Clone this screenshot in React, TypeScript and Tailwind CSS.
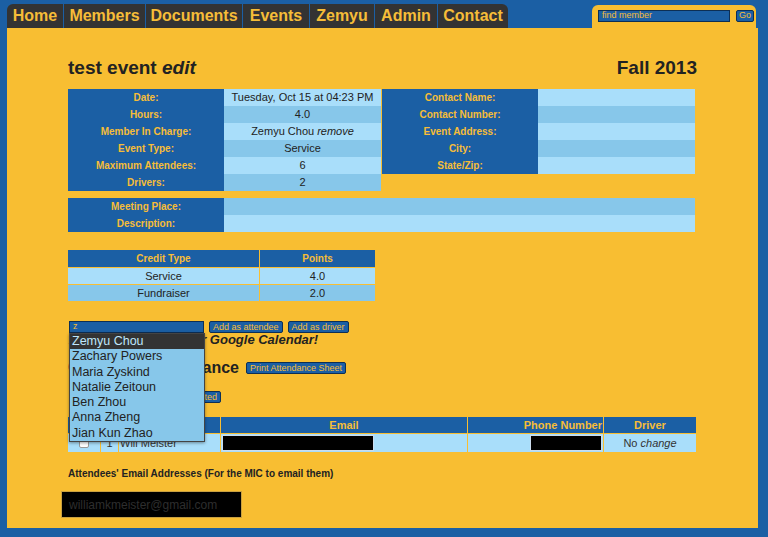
import React from "react";

const navItems = [
  { label: "Home", w: "w-[56px]", extra: "rounded-tl-md" },
  { label: "Members", w: "w-[81px]", extra: "" },
  { label: "Documents", w: "w-[96px]", extra: "" },
  { label: "Events", w: "w-[66px]", extra: "" },
  { label: "Zemyu", w: "w-[64px]", extra: "" },
  { label: "Admin", w: "w-[62px]", extra: "" },
  { label: "Contact", w: "w-[70px]", extra: "rounded-tr-md" },
];

const leftRows: { label: string; value: React.ReactNode }[] = [
  { label: "Date:", value: "Tuesday, Oct 15 at 04:23 PM" },
  { label: "Hours:", value: "4.0" },
  {
    label: "Member In Charge:",
    value: (
      <span>
        Zemyu Chou <i>remove</i>
      </span>
    ),
  },
  { label: "Event Type:", value: "Service" },
  { label: "Maximum Attendees:", value: "6" },
  { label: "Drivers:", value: "2" },
];

const rightRows = ["Contact Name:", "Contact Number:", "Event Address:", "City:", "State/Zip:"];

const suggestions = [
  "Zemyu Chou",
  "Zachary Powers",
  "Maria Zyskind",
  "Natalie Zeitoun",
  "Ben Zhou",
  "Anna Zheng",
  "Jian Kun Zhao",
];

const rowBg = (i: number) => (i % 2 === 0 ? "bg-[#a9defa]" : "bg-[#87c7ea]");

function Label({ children }: { children: React.ReactNode }) {
  return (
    <div className="flex h-[17px] items-center justify-center bg-[#1b5fa4] text-[10px] font-bold text-[#f6bd38]">
      {children}
    </div>
  );
}

function SmallButton({ children }: { children: React.ReactNode }) {
  return (
    <button
      type="button"
      className="h-[12px] rounded-[2px] border border-[#0d2f55] bg-[#1b5fa4] px-[3px] text-[9px] leading-[10px] text-[#f6bd38]"
    >
      {children}
    </button>
  );
}

export default function App() {
  return (
    <div className="min-h-[537px] bg-[#1b5fa4] pt-1 font-['Liberation_Sans',Arial,sans-serif] text-[#222]">
      {/* top bar */}
      <div className="flex h-6 items-end justify-between pl-[7px] pr-[12px]">
        <nav className="flex h-6 gap-px">
          {navItems.map((n) => (
            <div
              key={n.label}
              className={`flex h-6 items-center justify-center bg-[#333333] text-[16px] font-bold text-[#f6bd38] ${n.w} ${n.extra}`}
            >
              {n.label}
            </div>
          ))}
        </nav>
        <div className="flex h-[23px] w-[164px] items-start gap-[6px] rounded-t-md bg-[#f8be32] pl-[6px] pt-[5px]">
          <div className="flex h-[12px] w-[132px] items-center border border-[#0d2f55] bg-[#1b5fa4] px-[3px] text-[9px] text-[#f6bd38]">
            find member
          </div>
          <div className="flex h-[12px] w-[18px] items-center justify-center rounded-[2px] border border-[#0d2f55] bg-[#1b5fa4] text-[9px] text-[#f6bd38]">
            Go
          </div>
        </div>
      </div>

      {/* main panel */}
      <div className="ml-[7px] h-[500px] w-[751px] bg-[#f8be32] pl-[61px] pt-[29px]">
        <div className="flex w-[629px] items-center justify-between text-[19px] font-bold leading-[22px] text-[#222]">
          <div>
            test event <i>edit</i>
          </div>
          <div>Fall 2013</div>
        </div>

        <div className="mt-[10px] flex w-[627px] items-start gap-px">
          <div className="grid w-[313px] grid-cols-[156px_157px]">
            {leftRows.map((r, i) => (
              <React.Fragment key={r.label}>
                <Label>{r.label}</Label>
                <div className={`flex h-[17px] items-center justify-center text-[11px] text-[#222] ${rowBg(i)}`}>
                  {r.value}
                </div>
              </React.Fragment>
            ))}
          </div>
          <div className="grid w-[313px] grid-cols-[156px_157px]">
            {rightRows.map((l, i) => (
              <React.Fragment key={l}>
                <Label>{l}</Label>
                <div className={`h-[17px] ${rowBg(i)}`} />
              </React.Fragment>
            ))}
          </div>
        </div>

        <div className="mt-[7px] grid w-[627px] grid-cols-[156px_471px]">
          <Label>Meeting Place:</Label>
          <div className="h-[17px] bg-[#87c7ea]" />
          <Label>Description:</Label>
          <div className="h-[17px] bg-[#a9defa]" />
        </div>

        <div className="mt-[18px] grid w-[307px] grid-cols-[191px_115px] gap-px">
          <Label>Credit Type</Label>
          <Label>Points</Label>
          {[
            ["Service", "4.0"],
            ["Fundraiser", "2.0"],
          ].map(([t, p], i) => (
            <React.Fragment key={t}>
              <div className={`flex h-[16px] items-center justify-center text-[11px] ${rowBg(i)}`}>{t}</div>
              <div className={`flex h-[16px] items-center justify-center text-[11px] ${rowBg(i)}`}>{p}</div>
            </React.Fragment>
          ))}
        </div>

        {/* add attendee */}
        <div className="relative mt-[20px]">
          <div className="flex items-center gap-[5px] pl-px">
            <div className="flex h-[12px] w-[135px] items-center border border-[#0d2f55] bg-[#1b5fa4] px-[3px] text-[9px] text-[#f6bd38]">
              z
            </div>
            <SmallButton>Add as attendee</SmallButton>
            <SmallButton>Add as driver</SmallButton>
          </div>
          <div className="absolute left-px top-[12px] z-10 w-[136px] border border-[#444] bg-[#87c7ea] shadow-[0_1px_3px_rgba(0,0,0,0.4)]">
            {suggestions.map((s, i) => (
              <div
                key={s}
                className={`h-[15.3px] px-[2px] text-[12.5px] leading-[15.3px] ${
                  i === 0 ? "bg-[#333333] text-[#bfe6fb]" : "text-[#222]"
                }`}
              >
                {s}
              </div>
            ))}
          </div>

          <div className="h-[14px] pl-px text-[13px] font-bold italic leading-[14px] text-[#222]">
            Add this event to your Google Calendar!
          </div>

          <div className="mt-[11px] flex items-center gap-[7px]">
            <div className="text-[16px] font-bold leading-[20px] text-[#222]">Confirmed Attendance</div>
            <SmallButton>Print Attendance Sheet</SmallButton>
          </div>

          <div className="mt-[13px] flex h-[12px] items-center pl-[74px]">
            <SmallButton>Remove Selected</SmallButton>
          </div>
        </div>

        {/* attendees */}
        <div className="mt-[14px] grid w-[627px] grid-cols-[32px_17px_101px_246px_135px_92px] gap-x-px text-[11px]">
          <div className="h-[16px] bg-[#1b5fa4]" />
          <div className="h-[16px] bg-[#1b5fa4]" />
          <div className="h-[16px] bg-[#1b5fa4]" />
          <div className="flex h-[16px] items-center justify-center bg-[#1b5fa4] text-[11px] font-bold text-[#f6bd38]">
            Email
          </div>
          <div className="flex h-[16px] items-center justify-end bg-[#1b5fa4] pr-px text-[11px] font-bold text-[#f6bd38]">
            Phone Number
          </div>
          <div className="flex h-[16px] items-center justify-center bg-[#1b5fa4] text-[11px] font-bold text-[#f6bd38]">
            Driver
          </div>

          <div className="mt-px flex h-[18px] items-center justify-center bg-[#a9defa]">
            <div className="h-[10px] w-[10px] rounded-[2px] border border-[#999] bg-white" />
          </div>
          <div className="mt-px flex h-[18px] items-center justify-center bg-[#a9defa] text-[#333]">1</div>
          <div className="mt-px flex h-[18px] items-center bg-[#a9defa] pl-[1px] text-[#333]">Will Meister</div>
          <div className="mt-px flex h-[18px] items-center bg-[#a9defa] pl-px">
            <div className="h-[16px] w-[152px] border border-[#cde] bg-black" />
          </div>
          <div className="mt-px flex h-[18px] items-center justify-end bg-[#a9defa] pr-px">
            <div className="h-[16px] w-[72px] border border-[#cde] bg-black" />
          </div>
          <div className="mt-px flex h-[18px] items-center justify-center bg-[#a9defa] text-[#333]">
            No&nbsp;<i>change</i>
          </div>
        </div>

        <div className="mt-[16px] text-[10px] font-bold leading-[12px] text-[#222]">
          Attendees' Email Addresses (For the MIC to email them)
        </div>
        <div className="-ml-[7px] mt-[11px] flex h-[27px] w-[181px] items-center border border-[#c9a040] bg-black pl-[7px] text-[12px] text-[#2e2e2e]">
          williamkmeister@gmail.com
        </div>
      </div>
    </div>
  );
}
